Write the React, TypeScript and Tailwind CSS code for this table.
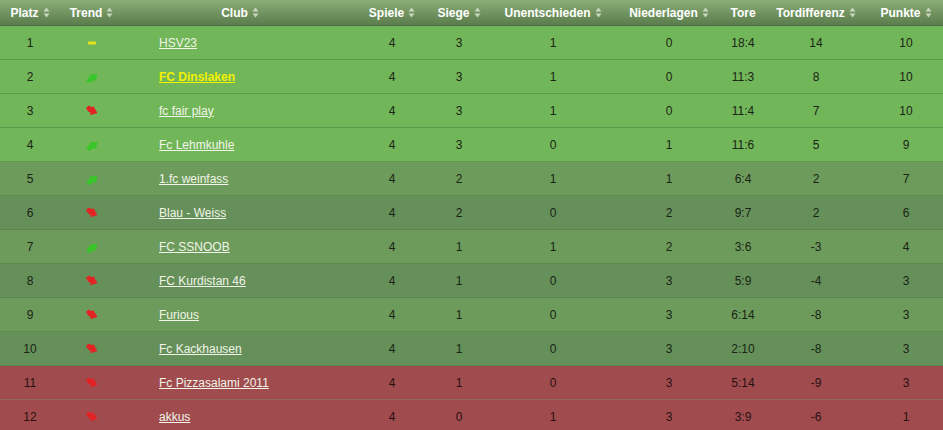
import React from "react";

type Trend = "same" | "up" | "down";

type Team = {
  platz: number;
  trend: Trend;
  club: string;
  spiele: number;
  siege: number;
  unent: number;
  nieder: number;
  tore: string;
  diff: number;
  punkte: number;
};

const teams: Team[] = [
  { platz: 1, trend: "same", club: "HSV23", spiele: 4, siege: 3, unent: 1, nieder: 0, tore: "18:4", diff: 14, punkte: 10 },
  { platz: 2, trend: "up", club: "FC Dinslaken", spiele: 4, siege: 3, unent: 1, nieder: 0, tore: "11:3", diff: 8, punkte: 10 },
  { platz: 3, trend: "down", club: "fc fair play", spiele: 4, siege: 3, unent: 1, nieder: 0, tore: "11:4", diff: 7, punkte: 10 },
  { platz: 4, trend: "up", club: "Fc Lehmkuhle", spiele: 4, siege: 3, unent: 0, nieder: 1, tore: "11:6", diff: 5, punkte: 9 },
  { platz: 5, trend: "up", club: "1.fc weinfass", spiele: 4, siege: 2, unent: 1, nieder: 1, tore: "6:4", diff: 2, punkte: 7 },
  { platz: 6, trend: "down", club: "Blau - Weiss", spiele: 4, siege: 2, unent: 0, nieder: 2, tore: "9:7", diff: 2, punkte: 6 },
  { platz: 7, trend: "up", club: "FC SSNOOB", spiele: 4, siege: 1, unent: 1, nieder: 2, tore: "3:6", diff: -3, punkte: 4 },
  { platz: 8, trend: "down", club: "FC Kurdistan 46", spiele: 4, siege: 1, unent: 0, nieder: 3, tore: "5:9", diff: -4, punkte: 3 },
  { platz: 9, trend: "down", club: "Furious", spiele: 4, siege: 1, unent: 0, nieder: 3, tore: "6:14", diff: -8, punkte: 3 },
  { platz: 10, trend: "down", club: "Fc Kackhausen", spiele: 4, siege: 1, unent: 0, nieder: 3, tore: "2:10", diff: -8, punkte: 3 },
  { platz: 11, trend: "down", club: "Fc Pizzasalami 2011", spiele: 4, siege: 1, unent: 0, nieder: 3, tore: "5:14", diff: -9, punkte: 3 },
  { platz: 12, trend: "down", club: "akkus", spiele: 4, siege: 0, unent: 1, nieder: 3, tore: "3:9", diff: -6, punkte: 1 },
];

const cols = "grid grid-cols-[60px_63px_234px_70px_64px_124px_108px_40px_106px_74px]";

function SortIcon() {
  return (
    <svg width="7" height="11" viewBox="0 0 7 11" className="ml-[4px] opacity-80">
      <path d="M3.5 0.5 L6.5 4.5 L0.5 4.5 Z" fill="#dfe8d8" />
      <path d="M3.5 10.5 L6.5 6.5 L0.5 6.5 Z" fill="#dfe8d8" />
    </svg>
  );
}

// chunky blurred arrows like the little gif icons
function TrendIcon({ trend }: { trend: Trend }) {
  if (trend === "same") {
    return (
      <svg width="12" height="8" viewBox="0 0 12 8">
        <rect x="2" y="2.5" width="8" height="3" rx="1" fill="#e6e41a" />
      </svg>
    );
  }
  if (trend === "up") {
    return (
      <svg width="14" height="12" viewBox="0 0 12 10" className="mt-[2px]">
        <path
          d="M2 8 L3 5 L5 4 L4.5 2.5 L10 2 L9 7 L7.5 6 L4.5 8.5 Z"
          fill="#3ac62a"
          stroke="#3ac62a"
          strokeWidth="1"
          strokeLinejoin="round"
        />
      </svg>
    );
  }
  return (
    <svg width="14" height="12" viewBox="0 0 12 10">
      <path
        d="M1.5 2.5 L3.5 1 L6 2.5 L7 1.5 L10 6.5 L5 8 L5.5 6.5 L3 5 Z"
        fill="#e22424"
        stroke="#e22424"
        strokeWidth="1"
        strokeLinejoin="round"
      />
    </svg>
  );
}

function Header({ label, sort = true }: { label: string; sort?: boolean }) {
  return (
    <div className="flex items-center justify-center">
      <span>{label}</span>
      {sort && <SortIcon />}
    </div>
  );
}

function rowStyle(p: number) {
  if (p <= 4) return "bg-[#72b65a] border-[#5e9849]";
  if (p <= 10) return p % 2 === 1 ? "bg-[#6c9b5b] border-[#5c8a4c]" : "bg-[#65905a] border-[#5a844d]";
  return "bg-[#a04c4f] border-[#8d6b58]";
}

export default function App() {
  return (
    <div className="w-[943px] h-[430px] overflow-hidden bg-[#65905a] font-['Liberation_Sans',Arial,sans-serif] text-[12px]">
      <div className={`${cols} h-[26px] items-center bg-gradient-to-b from-[#8aad77] to-[#5b7c4c] border-b border-[#4f6d42] font-bold text-white`}>
        <Header label="Platz" />
        <Header label="Trend" />
        <Header label="Club" />
        <Header label="Spiele" />
        <Header label="Siege" />
        <Header label="Unentschieden" />
        <Header label="Niederlagen" />
        <Header label="Tore" sort={false} />
        <Header label="Tordifferenz" />
        <Header label="Punkte" />
      </div>
      {teams.map((t) => (
        <div
          key={t.platz}
          className={`${cols} h-[34px] items-center border-b ${rowStyle(t.platz)} ${t.platz > 10 ? "text-[#2a1010]" : "text-[#1a2414]"}`}
        >
          <div className="text-center">{t.platz}</div>
          <div className="flex justify-center">
            <TrendIcon trend={t.trend} />
          </div>
          <div className="pl-[36px]">
            <a
              href="#"
              className={`underline ${t.club === "FC Dinslaken" ? "font-bold text-[#f2f200]" : "text-[#f1f4e8]"}`}
            >
              {t.club}
            </a>
          </div>
          <div className="text-center">{t.spiele}</div>
          <div className="text-center">{t.siege}</div>
          <div className="text-center">{t.unent}</div>
          <div className="text-center">{t.nieder}</div>
          <div className="text-center">{t.tore}</div>
          <div className="text-center">{t.diff}</div>
          <div className="text-center">{t.punkte}</div>
        </div>
      ))}
    </div>
  );
}
